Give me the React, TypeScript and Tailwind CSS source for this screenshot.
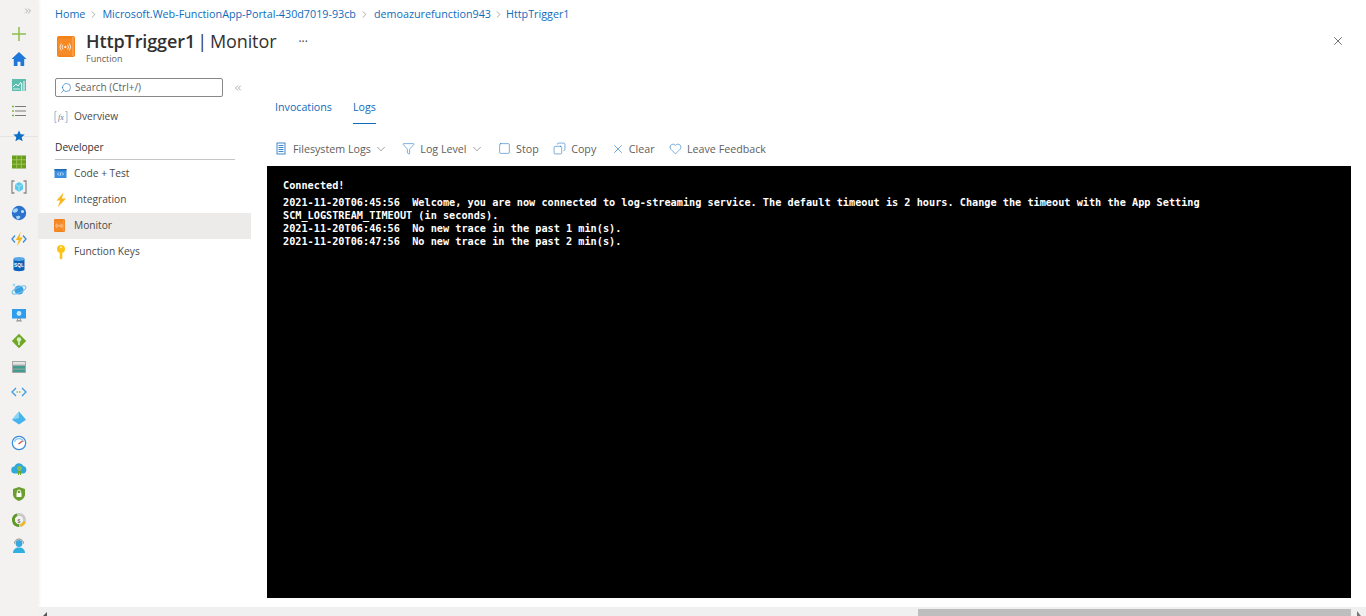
import { ReactNode } from "react";
import { ChevronDown, ChevronRight, ChevronsLeft, ChevronsRight, Copy, Filter, Heart, Search, Square, X } from "lucide-react";

const FONT = "font-['Open_Sans','Noto_Sans',sans-serif]";

function SvgIcon({ children }: { children: ReactNode }) {
  return (
    <svg width="16" height="16" viewBox="0 0 16 16" fill="none">
      {children}
    </svg>
  );
}

const railIcons: ReactNode[] = [
  // create
  <SvgIcon key="plus"><path d="M8 1v14M1 8h14" stroke="#8cc04b" strokeWidth="1.5" /></SvgIcon>,
  // home
  <SvgIcon key="home"><path d="M8 1 .5 8h2.300v7h3.700v-4.200h3V15h3.700V8h2.300z" fill="#1f78d8" /></SvgIcon>,
  // dashboard
  <SvgIcon key="dash">
    <rect x="1" y="2" width="14" height="12" fill="#5cbcae" />
    <path d="M2 10l3-3 2 2 3-4" stroke="#fff" strokeWidth="1" />
    <path d="M10.700 6v8M13 4v10" stroke="#fff" strokeWidth="1" />
    <path d="M2 12h7" stroke="#d8f0ec" strokeWidth="1" />
  </SvgIcon>,
  // all services
  <SvgIcon key="list">
    <path d="M4 3.500h11M4 8h11M4 12.500h11" stroke="#7a7a7a" strokeWidth="1.200" />
    <path d="M1 3.500h2M1 8h2M1 12.500h2" stroke="#7db83f" strokeWidth="1.600" />
  </SvgIcon>,
  // favorites
  <SvgIcon key="star"><path d="M8 2.500l1.700 3.700 4 .4-3 2.700.9 4L8 11.200 4.400 13.300l.9-4-3-2.700 4-.4z" fill="#0f6fc6" /></SvgIcon>,
  // all resources
  <SvgIcon key="grid">
    <rect x="1" y="1.500" width="14" height="13" fill="#6a9e1f" />
    <path d="M5.700 1.500v13M10.300 1.500v13M1 5.800h14M1 10.200h14" stroke="#a8d060" strokeWidth="0.800" />
  </SvgIcon>,
  // resource groups
  <SvgIcon key="rg">
    <path d="M3.500 2H1v12h2.500M12.500 2H15v12h-2.500" stroke="#8a8a8a" strokeWidth="1.300" />
    <path d="M8 3l4 2.300v5L8 13l-4-2.700v-5z" fill="#5cc8ec" />
    <path d="M4 5.300l4 2.300 4-2.300M8 7.600V13" stroke="#c4eefb" strokeWidth="0.700" />
  </SvgIcon>,
  // app services
  <SvgIcon key="web">
    <circle cx="8" cy="8" r="7.200" fill="#2a72cc" />
    <path d="M1.500 6C3 3.500 5 3 6.500 3.500 7.500 5 6.500 7 4.500 7.500 3 8 2 7.500 1.500 6z" fill="#a8d4f8" />
    <circle cx="11.500" cy="6.500" r="1.500" fill="#cbe6fb" />
    <path d="M5 11.500c1.500-1 3.500-1 4.500.3-.3 1.500-1.500 2.500-3 2.700C5.500 13.500 5 12.500 5 11.500z" fill="#a8d4f8" />
  </SvgIcon>,
  // function apps
  <SvgIcon key="fn">
    <path d="M4 4.500L1 8l3 3.500M12 4.500L15 8l-3 3.500" stroke="#3a8fd8" strokeWidth="1.300" />
    <path d="M9.800.8L4.800 9h3L6 15.200 11.800 6.500H8.500z" fill="#f5b418" />
  </SvgIcon>,
  // sql databases
  <SvgIcon key="sql">
    <path d="M2.500 3v10.500c0 1 2.500 1.700 5.500 1.700s5.500-.7 5.500-1.700V3z" fill="#0a62b8" />
    <ellipse cx="8" cy="3" rx="5.500" ry="1.900" fill="#58a8e8" />
    <text x="8" y="11.300" fontSize="4.800" fontWeight="700" textAnchor="middle" fill="#fff" fontFamily="Liberation Sans, sans-serif">SQL</text>
  </SvgIcon>,
  // cosmos
  <SvgIcon key="cosmos">
    <circle cx="8" cy="8" r="4.600" fill="#3aa0e0" />
    <ellipse cx="8" cy="8" rx="7.500" ry="2.700" stroke="#6cc0ee" strokeWidth="1" transform="rotate(-25 8 8)" />
    <circle cx="3" cy="3" r="1.400" fill="#9fd8f5" />
  </SvgIcon>,
  // virtual machines
  <SvgIcon key="vm">
    <rect x="1" y="2" width="14" height="9.500" fill="#2f9cec" />
    <circle cx="8" cy="6.500" r="2.400" fill="#c8e8fb" />
    <path d="M6.500 11.500h3v2h-3zM5 14h6" stroke="#999" strokeWidth="1" />
  </SvgIcon>,
  // load balancers
  <SvgIcon key="lb">
    <path d="M8 .8L15.200 8 8 15.200.8 8z" fill="#6fa828" />
    <circle cx="8" cy="6.500" r="2.200" fill="#d8f0c0" />
    <path d="M8 8.500v3.500" stroke="#fff" strokeWidth="1.300" />
  </SvgIcon>,
  // storage
  <SvgIcon key="storage">
    <rect x="1" y="2" width="14" height="12" fill="#a8a8a8" />
    <rect x="2" y="3" width="12" height="2.600" fill="#e4e4e4" />
    <rect x="2" y="7" width="12" height="2.600" fill="#3f9c8e" />
    <rect x="2" y="10.500" width="12" height="2.600" fill="#3f9c8e" />
  </SvgIcon>,
  // virtual networks
  <SvgIcon key="vnet">
    <path d="M5 4L1 8l4 4M11 4l4 4-4 4" stroke="#3a9ae0" strokeWidth="1.300" />
    <path d="M5.500 8h5" stroke="#8cc04b" strokeWidth="1.500" strokeDasharray="1.500 1" />
  </SvgIcon>,
  // azure ad
  <SvgIcon key="aad">
    <path d="M8 1.500L15 9.700 8 14.500 1 9.700z" fill="#45b4ec" />
    <path d="M8 1.500L1 9.700l7-1.700z" fill="#8ad4f6" />
  </SvgIcon>,
  // monitor
  <SvgIcon key="gauge">
    <circle cx="8" cy="8" r="6.700" fill="#fff" stroke="#3a8ad8" strokeWidth="1.200" />
    <path d="M3.500 7A4.700 4.700 0 0 1 12.500 7" stroke="#8cc4f0" strokeWidth="1.300" />
    <path d="M7.500 9l4-3" stroke="#d84a3a" strokeWidth="1.200" />
  </SvgIcon>,
  // advisor
  <SvgIcon key="advisor">
    <path d="M4 12.500a3.500 3.500 0 0 1-.5-7A4.700 4.700 0 0 1 12.300 5a3.800 3.800 0 0 1-.3 7.500z" fill="#2fa8dc" />
    <circle cx="8.500" cy="7.500" r="2.400" fill="#8cc04b" />
    <path d="M7.500 10v4M9.500 10v4" stroke="#6fa828" strokeWidth="1" />
  </SvgIcon>,
  // security center
  <SvgIcon key="shield">
    <path d="M8 1l6 2v5.500c0 3-2.700 5.300-6 6.500-3.300-1.200-6-3.500-6-6.500V3z" fill="#6a9e2f" />
    <rect x="5.500" y="7" width="5" height="4" fill="#fff" />
    <path d="M6.300 7V5.800a1.700 1.700 0 0 1 3.400 0V7" stroke="#fff" strokeWidth="1" />
  </SvgIcon>,
  // cost management
  <SvgIcon key="cost">
    <circle cx="8" cy="8" r="5.600" stroke="#c8c8c8" strokeWidth="2.800" />
    <path d="M8 13.600A5.600 5.600 0 0 1 6 2.800" stroke="#5c9a24" strokeWidth="2.800" />
    <path d="M13.400 9.500A5.600 5.600 0 0 1 9.500 13.400" stroke="#f0b820" strokeWidth="2.800" />
    <text x="8" y="10.500" fontSize="6" textAnchor="middle" fill="#555">$</text>
  </SvgIcon>,
  // help + support
  <SvgIcon key="help">
    <circle cx="8" cy="5.500" r="3.400" fill="#3aa8dc" />
    <path d="M3.500 5.500a4.500 4.500 0 0 1 9 0" stroke="#8a8a8a" strokeWidth="1" />
    <path d="M2 15c0-3.500 2.500-5.500 6-5.500s6 2 6 5.500z" fill="#2fb0e0" />
  </SvgIcon>,
];

function FunctionIcon({ width, height }: { width: number; height: number }) {
  return (
    <svg width={width} height={height} viewBox="0 0 18 21" fill="none">
      <rect x="0" y="0" width="18" height="21" rx="2" fill="#f2821b" />
      <path d="M1 2.500h14.500V19.500H1z" fill="#f58a26" />
      <path d="M16 1v19" stroke="#f9b77a" strokeWidth="1" />
      <circle cx="8.300" cy="11" r="1.100" fill="#fff" />
      <path d="M6 8.800a3.300 3.300 0 0 0 0 4.400M10.600 8.800a3.300 3.300 0 0 1 0 4.400M4.300 7.500a5.500 5.500 0 0 0 0 7M12.300 7.500a5.500 5.500 0 0 1 0 7" stroke="#fff" strokeWidth="0.800" />
    </svg>
  );
}

const navIcons = {
  overview: (
    <svg width="14" height="14" viewBox="0 0 14 14" fill="none">
      <path d="M2.500 1.500H1v11h1.500M11.500 1.500H13v11h-1.500" stroke="#8fa6bd" strokeWidth="0.800" />
      <text x="7" y="10" fontSize="8" fontStyle="italic" fontFamily="Liberation Serif, serif" textAnchor="middle" fill="#5a7a98">fx</text>
    </svg>
  ),
  code: (
    <svg width="13" height="13" viewBox="0 0 13 13" fill="none">
      <rect x="0.500" y="2" width="12" height="9" fill="#3a8ee0" />
      <rect x="0.500" y="2" width="12" height="1.500" fill="#1f66b8" />
      <path d="M4.800 5.500L3.500 7l1.300 1.500M8.200 5.500L9.500 7 8.200 8.500M7 5.300l-1 3.400" stroke="#fff" strokeWidth="0.700" />
    </svg>
  ),
  bolt: (
    <svg width="14" height="16" viewBox="0 0 14 16" fill="none">
      <path d="M9.500.5 2.500 8.500h3.700L3.500 15.500 12 6.500H8z" fill="#f7b921" />
    </svg>
  ),
  key: (
    <svg width="14" height="16" viewBox="0 0 14 16" fill="none">
      <circle cx="7" cy="5" r="4" fill="#fcc419" />
      <path d="M5.700 8h2.600v6.500L7 15.500l-1.300-1z" fill="#fcc419" />
      <circle cx="7" cy="3.300" r="1" fill="#fff3c0" />
    </svg>
  ),
};

function NavItem({ icon, label, active }: { icon: ReactNode; label: string; active?: boolean }) {
  return (
    <div className={`flex h-[26px] items-center pl-[16px] ${active ? "bg-[#edebe9]" : ""}`}>
      <span className="flex w-[20px] shrink-0 items-center justify-start">{icon}</span>
      <span className="text-[10.200px] text-[#4a4a4a]">{label}</span>
    </div>
  );
}

function ToolbarItem({ icon, label, chevron }: { icon: ReactNode; label: string; chevron?: boolean }) {
  return (
    <div className="flex items-center">
      <span className="flex w-[18px] shrink-0 items-center">{icon}</span>
      <span className="text-[10.700px] text-[#605e5c]">{label}</span>
      {chevron && <ChevronDown size={14} strokeWidth={1} className="ml-[3px] text-[#605e5c]" />}
    </div>
  );
}

export default function App() {
  return (
    <div className={`flex h-[616px] w-[1366px] flex-col overflow-hidden bg-white ${FONT}`}>
      <div className="flex min-h-0 flex-1">
        {/* left rail */}
        <aside className="flex w-[38px] shrink-0 flex-col items-center bg-[#f3f2f1] pt-[4px] shadow-[1px_0_3px_rgba(0,0,0,0.08)]">
          <div className="flex h-[13px] w-full items-center justify-end pr-[5px]">
            <ChevronsRight size={10} strokeWidth={1.200} className="text-[#666]" />
          </div>
          <div className="mt-[4px] flex w-full flex-col">
            {railIcons.map((icon, i) => (
              <div key={i} className="relative flex h-[25.600px] items-center justify-center">
                {i === 4 && <div className="absolute inset-x-0 top-1/2 h-px bg-[#e6e4e2]" />}
                <span className="relative flex">{icon}</span>
              </div>
            ))}
          </div>
        </aside>

        <main className="flex min-w-0 flex-1 flex-col">
          {/* breadcrumb */}
          <nav className="flex h-[28px] items-center pl-[17px] text-[10.750px] text-[#0f6cbd]">
            <span>Home</span>
            <ChevronRight size={11} strokeWidth={1.200} className="mx-[3px] text-[#666]" />
            <span>Microsoft.Web-FunctionApp-Portal-430d7019-93cb</span>
            <ChevronRight size={11} strokeWidth={1.200} className="mx-[3.500px] text-[#666]" />
            <span>demoazurefunction943</span>
            <ChevronRight size={11} strokeWidth={1.200} className="mx-[2px] text-[#666]" />
            <span>HttpTrigger1</span>
          </nav>

          {/* title */}
          <header className="flex h-[40px] items-start pl-[19px] pr-[21px]">
            <div className="mt-[8px] w-[29px] shrink-0">
              <FunctionIcon width={18} height={21} />
            </div>
            <div className="flex flex-col">
              <h1 className="text-[18px] leading-[26px] tracking-[-0.100px] text-[#323130]">
                <span className="font-semibold">HttpTrigger1</span>
                <span className="ml-[2px] mr-[3px]">|</span>
                <span>Monitor</span>
              </h1>
              <span className="text-[9px] leading-[10px] text-[#605e5c]">Function</span>
            </div>
            <span className="ml-[22px] mt-[4px] text-[12px] leading-[20px] text-[#444]">···</span>
            <X size={14} strokeWidth={1.200} className="ml-auto mt-[6px] text-[#333]" />
          </header>

          <div className="flex min-h-0 flex-1">
            {/* resource menu */}
            <section className="flex w-[213px] shrink-0 flex-col pt-[10px]">
              <div className="flex items-center pl-[17px]">
                <div className="flex h-[19px] w-[168px] items-center rounded-[2px] border border-[#8a8886] pl-[4px]">
                  <Search size={12} strokeWidth={1.200} className="-scale-x-100 text-[#0f6cbd]" />
                  <span className="ml-[3px] text-[10px] text-[#605e5c]">Search (Ctrl+/)</span>
                </div>
                <ChevronsLeft size={10} strokeWidth={1.200} className="ml-[10px] text-[#555]" />
              </div>
              <div className="mt-[7px]">
                <NavItem icon={navIcons.overview} label="Overview" />
              </div>
              <div className="mx-[17px] mb-[0.500px] mt-[7px] flex h-[23px] w-[180px] items-center border-b border-[#c8c6c4] text-[10.200px] text-[#323130]">
                Developer
              </div>
              <NavItem icon={navIcons.code} label="Code + Test" />
              <NavItem icon={navIcons.bolt} label="Integration" />
              <NavItem icon={<FunctionIcon width={11} height={13} />} label="Monitor" active />
              <NavItem icon={navIcons.key} label="Function Keys" />
            </section>

            {/* log panel */}
            <section className="flex min-w-0 flex-1 flex-col pl-[16px] pr-[15px] pt-[17px]">
              <div className="flex h-[39px] items-stretch gap-[21px] pl-[8px] pt-[5px] text-[10.700px] text-[#0f6cbd]">
                <span className="flex items-center pt-[1px]">Invocations</span>
                <span className="flex items-center border-b border-[#0f6cbd] pt-[2px]">Logs</span>
              </div>
              <div className="flex h-[42px] items-center gap-[14.500px] pl-[8px] pt-[8px]">
                <ToolbarItem
                  icon={
                    <svg width="12" height="13" viewBox="0 0 12 13" fill="none" stroke="#0f6cbd" strokeWidth="0.800">
                      <rect x="2" y="1" width="8" height="11" />
                      <path d="M3.500 3.500h5M3.500 5.500h5M3.500 7.500h5M3.500 9.500h5" />
                    </svg>
                  }
                  label="Filesystem Logs"
                  chevron
                />
                <ToolbarItem icon={<Filter size={13} strokeWidth={1} className="text-[#0f6cbd]" />} label="Log Level" chevron />
                <ToolbarItem icon={<Square size={13} strokeWidth={1} className="text-[#0f6cbd]" />} label="Stop" />
                <ToolbarItem icon={<Copy size={13} strokeWidth={1} className="-scale-x-100 text-[#0f6cbd]" />} label="Copy" />
                <ToolbarItem icon={<X size={14} strokeWidth={1} className="text-[#0f6cbd]" />} label="Clear" />
                <ToolbarItem icon={<Heart size={13} strokeWidth={1} className="text-[#0f6cbd]" />} label="Leave Feedback" />
              </div>
              <div className="h-[432px] bg-black pl-[16px] pr-[140px] pt-[13px] font-['DejaVu_Sans_Mono',monospace] text-[10.220px] font-bold leading-[13px] text-white">
                <p className="mb-[4px]">Connected!</p>
                <p className="whitespace-pre-wrap">
                  2021-11-20T06:45:56  Welcome, you are now connected to log-streaming service. The default timeout is 2 hours. Change the timeout with the App Setting SCM_LOGSTREAM_TIMEOUT (in seconds).
                </p>
                <p className="whitespace-pre-wrap">2021-11-20T06:46:56  No new trace in the past 1 min(s).</p>
                <p className="whitespace-pre-wrap">2021-11-20T06:47:56  No new trace in the past 2 min(s).</p>
              </div>
            </section>
          </div>
        </main>
      </div>

      {/* horizontal scrollbar */}
      <div className="flex h-[9px] shrink-0">
        <div className="w-[38px] bg-[#f3f2f1]" />
        <div className="flex min-w-0 flex-1 items-end bg-[#f0f0f0]">
          <svg width="15" height="9" viewBox="0 0 15 9" fill="#555" className="shrink-0">
            <path d="M5 9l4-4v4z" />
          </svg>
          <div className="w-[865px]" />
          <div className="h-[7px] w-[433px] bg-[#bebebe]" />
          <svg width="15" height="9" viewBox="0 0 15 9" fill="#777" className="shrink-0">
            <path d="M6 4l4 5H6z" />
          </svg>
        </div>
      </div>
    </div>
  );
}
